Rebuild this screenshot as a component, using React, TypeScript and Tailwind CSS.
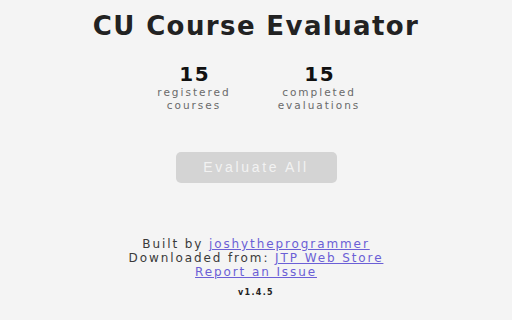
export default function App() {
  const f = { fontFamily: '"DejaVu Sans", "Noto Sans", sans-serif' };
  return (
    <div className="w-[512px] h-[320px] bg-[#f4f4f4] flex flex-col items-center overflow-hidden" style={f}>
      <h1 className="mt-[10px] text-[26px] leading-[32px] font-bold text-[#222222] tracking-[1.4px]">CU Course Evaluator</h1>
      <div className="mt-[22px] flex gap-[35px] pl-[1px]">
        <div className="flex flex-col items-center w-[90px]">
          <div className="text-[20px] leading-[20px] font-bold text-[#111111] tracking-[1.5px] pl-[1.5px]">15</div>
          <div className="mt-[2px] text-[10.5px] leading-[12.5px] text-[#6a6a6a] text-center tracking-[2px]">
            <div>registered</div>
            <div>courses</div>
          </div>
        </div>
        <div className="flex flex-col items-center w-[90px]">
          <div className="text-[20px] leading-[20px] font-bold text-[#111111] tracking-[1.5px] pl-[1.5px]">15</div>
          <div className="mt-[2px] text-[10.5px] leading-[12.5px] text-[#6a6a6a] text-center tracking-[2px]">
            <div>completed</div>
            <div>evaluations</div>
          </div>
        </div>
      </div>
      <button className="mt-[41px] w-[161px] h-[31px] rounded-[5px] bg-[#d4d4d4] text-[#f2f2f2] text-[14px] tracking-[2.7px]" style={{ fontFamily: '"Liberation Sans", Arial, sans-serif' }}>Evaluate All</button>
      <div className="mt-[54px] text-[12px] leading-[14px] text-[#3a3a3a] text-center tracking-[1.9px]">
        <div>Built by <a className="text-[#6b5fd6] underline">joshytheprogrammer</a></div>
        <div>Downloaded from: <a className="text-[#6b5fd6] underline">JTP Web Store</a></div>
        <div><a className="text-[#6b5fd6] underline">Report an Issue</a></div>
        <div className="mt-[9px] text-[8px] leading-[10px] font-bold text-[#222222] tracking-[1.3px]">v1.4.5</div>
      </div>
    </div>
  );
}
